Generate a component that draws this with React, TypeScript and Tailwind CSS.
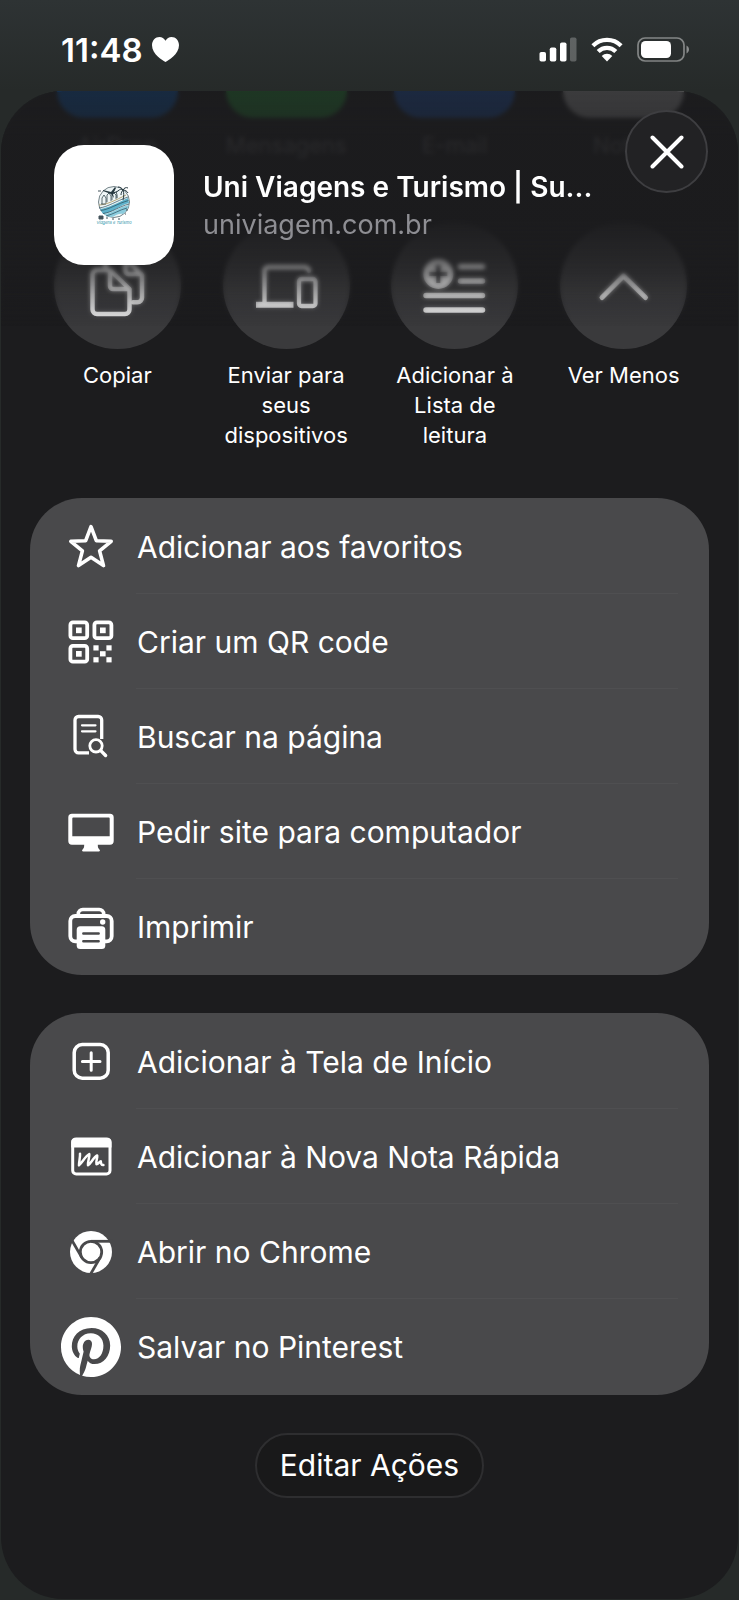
import type { ReactNode } from "react";
import { FaPinterest } from "react-icons/fa";

type Action = { label: string; icon: ReactNode };

const Glyph = ({ children }: { children: ReactNode }) => (
  <svg viewBox="0 0 60 60" className="size-[60px] shrink-0" fill="none" stroke="currentColor" strokeLinecap="round" strokeLinejoin="round" aria-hidden="true">
    {children}
  </svg>
);

const pageActions: Action[] = [
  {
    label: "Adicionar aos favoritos",
    icon: (
      <Glyph>
        <path strokeWidth="3.6" d="M30 9.7 35.3 23.7 50.2 24.3 38.6 33.9 42.5 48.6 30 40.3 17.5 48.6 21.4 33.9 9.8 24.3 24.7 23.7Z" />
      </Glyph>
    ),
  },
  {
    label: "Criar um QR code",
    icon: (
      <Glyph>
        <g strokeWidth="3.8">
          <rect x="9.4" y="10.4" width="16.8" height="15.8" rx="2.5" />
          <rect x="33.4" y="10.4" width="17" height="15.8" rx="2.5" />
          <rect x="9.4" y="33.9" width="16.8" height="15.8" rx="2.5" />
        </g>
        <g fill="currentColor" stroke="none">
          <rect x="15" y="15.5" width="5.7" height="5.7" />
          <rect x="39" y="15.5" width="5.7" height="5.7" />
          <rect x="15" y="39" width="5.7" height="5.7" />
          <rect x="32.4" y="33.3" width="5.2" height="5.2" />
          <rect x="45.4" y="33.3" width="5.2" height="5.2" />
          <rect x="39" y="39.2" width="5.6" height="5.2" />
          <rect x="32.4" y="45.2" width="5.2" height="5.2" />
          <rect x="45.4" y="45.2" width="5.2" height="5.2" />
        </g>
      </Glyph>
    ),
  },
  {
    label: "Buscar na página",
    icon: (
      <Glyph>
        <path strokeWidth="3.3" strokeLinecap="butt" d="M40.7 32V13a3.5 3.5 0 0 0-3.5-3.5H17.5A3.5 3.5 0 0 0 14 13v29.3a3.5 3.5 0 0 0 3.5 3.5H28" />
        <path strokeWidth="2.2" d="M21 18.3h13.5M21 24.3h13.5" />
        <circle cx="35" cy="38.8" r="6.2" strokeWidth="2.8" />
        <path strokeWidth="3.4" d="M39.8 43.6 44.6 48.5" />
      </Glyph>
    ),
  },
  {
    label: "Pedir site para computador",
    icon: (
      <Glyph>
        <path
          fill="currentColor"
          stroke="none"
          fillRule="evenodd"
          d="M11 11.8h38a3.7 3.7 0 0 1 3.7 3.7v23.6a3.7 3.7 0 0 1-3.7 3.7H36.8c0 2.6.4 3.6 1.6 4.6 1 .9.6 2-.6 2H22.2c-1.2 0-1.6-1.1-.6-2 1.200-1 1.600-2 1.600-4.600H11a3.7 3.7 0 0 1-3.7-3.700V15.500A3.7 3.7 0 0 1 11 11.800ZM12.200 15.600a.9.9 0 0 0-.9.9v17.800h37.400V16.500a.9.9 0 0 0-.9-.9Z"
        />
      </Glyph>
    ),
  },
  {
    label: "Imprimir",
    icon: (
      <Glyph>
        <path strokeWidth="3.6" d="M17.3 18.5v-1.5a4.5 4.5 0 0 1 4.5-4.5h16.4a4.5 4.5 0 0 1 4.5 4.5v1.5" />
        <path strokeWidth="3.8" d="M16 44.3h-1.7a5 5 0 0 1-5-5V24a5 5 0 0 1 5-5h31.4a5 5 0 0 1 5 5v15.3a5 5 0 0 1-5 5H44" />
        <rect x="15.7" y="29.3" width="28.6" height="22.7" rx="3.5" fill="currentColor" stroke="none" />
        <path stroke="#49494b" strokeWidth="2.4" d="M22.3 36.5h15.4M22.3 44.2h15.4" />
        <circle cx="41.7" cy="25" r="2.7" fill="currentColor" stroke="none" />
      </Glyph>
    ),
  },
];

const appActions: Action[] = [
  {
    label: "Adicionar à Tela de Início",
    icon: (
      <Glyph>
        <rect x="13.2" y="12.6" width="34" height="33.6" rx="8" strokeWidth="3.5" />
        <path strokeWidth="3" d="M30.2 20.8v17.4M21.4 29.5H39" />
      </Glyph>
    ),
  },
  {
    label: "Adicionar à Nova Nota Rápida",
    icon: (
      <Glyph>
        <rect x="11.7" y="12" width="37.3" height="35" rx="3.5" strokeWidth="3" />
        <path fill="currentColor" stroke="none" d="M10.2 15a4 4 0 0 1 4-4h32.3a4 4 0 0 1 4 4v5.5H10.2Z" />
        <path strokeWidth="2.5" d="M19 26.700c.4 3.500-1.200 8.500-1 11.600C21 36 24.500 29 28.300 27c.6 3.400-2 8.300-1.300 11.300 3-1.800 5.500-8.200 9.200-9.800.5 2.800-1.700 6-.7 8.800 1.800 0 3-3 4.300-3 .2 2.300.5 3.900 2.600 3.700" />
      </Glyph>
    ),
  },
  {
    label: "Abrir no Chrome",
    icon: (
      <Glyph>
        <circle cx="30" cy="30" r="21" fill="currentColor" stroke="none" />
        <g stroke="#49494b" strokeWidth="2.8" strokeLinecap="butt">
          <circle cx="30" cy="30" r="10.7" fill="currentColor" />
          <path d="M30 19.3h22" />
          <path d="M30 19.3h22" transform="rotate(120 30 30)" />
          <path d="M30 19.3h22" transform="rotate(240 30 30)" />
        </g>
      </Glyph>
    ),
  },
  { label: "Salvar no Pinterest", icon: <FaPinterest className="-mx-px size-[62px] shrink-0" aria-hidden="true" /> },
];

const shortcuts: Action[] = [
  {
    label: "Copiar",
    icon: (
      <g strokeWidth="4.5">
        <path d="M54 48H43a4.5 4.5 0 0 0-4.5 4.5v35A4.5 4.5 0 0 0 43 92h28a4.5 4.5 0 0 0 4.5-4.5V67L56 48Z" />
        <path d="M56 49v15a3 3 0 0 0 3 3h16" />
        <path d="M79 80.300h4.500a4.500 4.500 0 0 0 4.500-4.500V53L70 35H56a4.500 4.500 0 0 0-4.500 4.500V44" />
        <path d="M71.500 38v11a3 3 0 0 0 3 3H87" />
      </g>
    ),
  },
  {
    label: "Enviar para seus dispositivos",
    icon: (
      <g strokeWidth="4.3">
        <path d="M41.5 81V48.5a3.5 3.5 0 0 1 3.5-3.5h37a4 4 0 0 1 4 4" />
        <path strokeWidth="6" strokeLinecap="butt" d="M33 82.8h37.5" />
        <rect x="76" y="57" width="16.5" height="27" rx="2.5" />
      </g>
    ),
  },
  {
    label: "Adicionar à Lista de leitura",
    icon: (
      <g strokeWidth="5.5">
        <circle cx="47.3" cy="52" r="15" fill="currentColor" stroke="none" />
        <path stroke="#303032" strokeWidth="4" strokeLinecap="butt" d="M47.3 43v18M38.3 52h18" />
        <path d="M69.5 44.5h22M69.5 59h22M35 73.5h56.5M35 88h56.5" />
      </g>
    ),
  },
  { label: "Ver Menos", icon: <path strokeWidth="5" d="M42 75.5 63.5 54 85.5 75.5" /> },
];

// targets scrolled up under the header
const targets = [
  { label: "AirDrop", color: "bg-[#0a63c8]" },
  { label: "Mensagens", color: "bg-[#28a03c]" },
  { label: "E-mail", color: "bg-[#1c5cc4]" },
  { label: "Notas", color: "bg-[#b8b8b8]" },
];

function StatusBar() {
  return (
    <header className="flex h-[91px] items-center justify-between pr-[49px] pl-[61px]">
      <div className="flex items-center gap-[9px] pt-2">
        <time className="text-[33px] leading-10 font-semibold">11:48</time>
        <svg viewBox="0 0 27 25" className="h-[25px] w-[27px]" fill="currentColor" aria-hidden="true">
          <path d="M13.5 25C11 23.5 0 17.5 0 8.3 0 3.5 3.3 0 7.5 0c2.5 0 4.7 1.4 6 3.7C14.8 1.4 17 0 19.5 0 23.7 0 27 3.5 27 8.3 27 17.5 16 23.5 13.5 25Z" />
        </svg>
      </div>
      <div className="flex items-center gap-[14px] pt-2">
        <svg viewBox="0 0 38 25" className="h-[25px] w-[38px]" fill="currentColor" aria-hidden="true">
          <rect x="0.5" y="15" width="6.5" height="9.5" rx="1.8" />
          <rect x="10.8" y="10.5" width="6.5" height="14" rx="1.8" />
          <rect x="21" y="5.5" width="6.5" height="19" rx="1.8" />
          <rect x="31" y="0.5" width="6.5" height="24" rx="1.8" opacity=".25" />
        </svg>
        <svg viewBox="0 0 32 25" className="h-[25px] w-8" fill="none" stroke="currentColor" aria-hidden="true">
          <path strokeWidth="4.2" d="M1.9 8.7a20 20 0 0 1 28.2 0" />
          <path strokeWidth="4.2" d="M7.2 14.4a12.5 12.5 0 0 1 17.6 0" />
          <path fill="currentColor" stroke="none" d="M16 24.5 10.7 19a7.5 7.5 0 0 1 10.6 0Z" />
        </svg>
        <svg viewBox="0 0 53 25" className="h-[25px] w-[53px]" fill="none" aria-hidden="true">
          <rect x="1" y="1" width="46" height="23" rx="7" stroke="currentColor" strokeWidth="1.7" opacity=".42" />
          <rect x="4" y="4" width="30" height="17" rx="4.5" fill="currentColor" />
          <path d="M49.500 8.500c1.500.8 2.500 2.200 2.500 4s-1 3.200-2.500 4Z" fill="currentColor" opacity=".45" />
        </svg>
      </div>
    </header>
  );
}

function SiteLogo() {
  return (
    <svg viewBox="0 0 40 42" className="h-[42px] w-10" fill="none" aria-label="Viagens e Turismo">
      <circle cx="20" cy="18" r="15.5" stroke="#54666c" strokeWidth=".8" fill="#eef5f6" />
      <path d="M6 25c8-1 17-6 28-11l1 5c-9 2-15 9-26 11Z" fill="#5fb2cb" />
      <path d="M10 30c9-1 15-7 25-9-1 4-3 7-6 9-6-1-8 3-12 3-3 0-5-1-7-3Z" fill="#8cccdd" />
      <path d="M5 24c9-1 17-7 29-11M6.5 26.5c9-1 17-7 28-10M9 29.5c9-1 16-7 26-9.5M12 32c8-2 13-6 21-8" stroke="#284d5c" strokeWidth=".7" />
      <path d="M5 21c7 0 17-5 27-10" stroke="#b4a577" strokeWidth="1" />
      <path d="M8 20v-6l2-3 2 3v5M13 18v-7l2-2 2 3v5M18 16v-5l2-2 2 2v4M7 20h5" stroke="#34474e" strokeWidth=".8" />
      <path d="m9 6 8 2 4-5 1 1-3 6 1 4-3-4-8-3Z" fill="#26383f" />
      <path d="M29 16c1-4 1-7 0-10m0 0c-2-1-3-1-5 1m5-1c-1-2-3-3-5-3m5 3c1-2 3-3 5-2m-5 2c2 0 4 1 5 3m-5-3c-1 1-2 3-2 5M23 14c0-3 0-4-1-6m0 0-3 1m3-1 2-1" stroke="#26383f" strokeWidth="1" />
      <path d="M4 7h3M5 32h4v3H5ZM12 34h2m4 1h2m4 0h2m6-9h2m-3 4h1" stroke="#43525a" strokeWidth="1" fill="#43525a" />
      <text x="20" y="40" textAnchor="middle" fontSize="4" fontStyle="italic" fill="#2790a6">
        Viagens e Turismo
      </text>
    </svg>
  );
}

function SheetHeader() {
  return (
    <div className="absolute inset-x-0 top-0">
      <div className="absolute inset-x-0 top-0 h-[235px] backdrop-blur-[2px] [mask-image:linear-gradient(to_bottom,#000_75%,transparent)]" />
      <div className="absolute inset-x-0 top-0 h-[250px] bg-[linear-gradient(to_bottom,rgba(28,28,30,0.8)_0px,rgba(28,28,30,0.84)_25px,rgba(28,28,30,0.95)_45px,rgba(28,28,30,0.94)_130px,rgba(28,28,30,0.62)_172px,rgba(28,28,30,0.26)_202px,rgba(28,28,30,0)_235px)]" />
      <div className="relative flex items-start pt-[19px] pr-[30px] pl-[53px]">
        <div className="mt-[35px] flex size-[120px] shrink-0 items-center justify-center rounded-[30px] bg-white">
          <SiteLogo />
        </div>
        <div className="mt-[58px] ml-[29px] min-w-0 flex-1">
          <h1 className="truncate text-[28px] leading-[38px] font-semibold">Uni Viagens e Turismo | Su...</h1>
          <p className="text-[27px] leading-[38px] text-[#8e8e93]">univiagem.com.br</p>
        </div>
        <button type="button" aria-label="Fechar" className="flex size-[83px] shrink-0 items-center justify-center rounded-full border-2 border-[#3e3e41] bg-[#222224]">
          <svg viewBox="0 0 34 34" className="size-[34px]" fill="none" stroke="currentColor" strokeWidth="4" strokeLinecap="round" aria-hidden="true">
            <path d="m2.500 2.500 29 29m0-29-29 29" />
          </svg>
        </button>
      </div>
    </div>
  );
}

function ActionCard({ actions }: { actions: Action[] }) {
  return (
    <ul className="mx-[29px] rounded-[52px] bg-[#49494b] py-px">
      {actions.map((action, i) => (
        <li key={action.label}>
          <button type="button" className="flex h-[95px] w-full items-center gap-[15px] px-[31px] text-left">
            {action.icon}
            <span className={`flex h-full flex-1 items-center border-b pt-0.5 pl-px text-[30px] ${i < actions.length - 1 ? "border-[#4f4f51]" : "border-transparent"}`}>
              {action.label}
            </span>
          </button>
        </li>
      ))}
    </ul>
  );
}

export default function App() {
  return (
    <div className="flex min-h-screen flex-col bg-[#252a29] bg-[linear-gradient(to_bottom,#2e3334_0px,#262a29_91px)] bg-no-repeat pb-[2px] font-[Inter,'Liberation_Sans',sans-serif] text-white">
      <StatusBar />
      <main className="relative mx-px flex-1 overflow-hidden rounded-[62px] bg-[#1c1c1e]">
        <div className="grid grid-cols-4 pr-[30px] pl-8">
          {targets.map((t) => (
            <div key={t.label} className="flex flex-col items-center">
              <div className={`h-[27px] w-[121px] rounded-b-[38px] ${t.color}`} />
              <span className="mt-3 text-[22px] leading-[30px]">{t.label}</span>
            </div>
          ))}
        </div>
        <div className="mt-[62px] grid grid-cols-4 pr-[30px] pl-8">
          {shortcuts.map((s) => (
            <button type="button" key={s.label} className="flex flex-col items-center">
              <span className="size-[127px] rounded-full bg-[#3a3a3c]">
                <svg viewBox="0 0 127 127" className="size-full text-[#f2f2f2]" fill="none" stroke="currentColor" strokeLinecap="round" strokeLinejoin="round" aria-hidden="true">
                  {s.icon}
                </svg>
              </span>
              <span className="mt-[11px] w-[132px] text-[22px] leading-[30px]">{s.label}</span>
            </button>
          ))}
        </div>
        <div className="mt-12 flex flex-col gap-[38px]">
          <ActionCard actions={pageActions} />
          <ActionCard actions={appActions} />
          <button type="button" className="mb-[101px] h-[65px] self-center rounded-full border-2 border-[#2e2e30] bg-[#19191a] px-[23px] text-[30px]">
            Editar Ações
          </button>
        </div>
        <SheetHeader />
      </main>
    </div>
  );
}
